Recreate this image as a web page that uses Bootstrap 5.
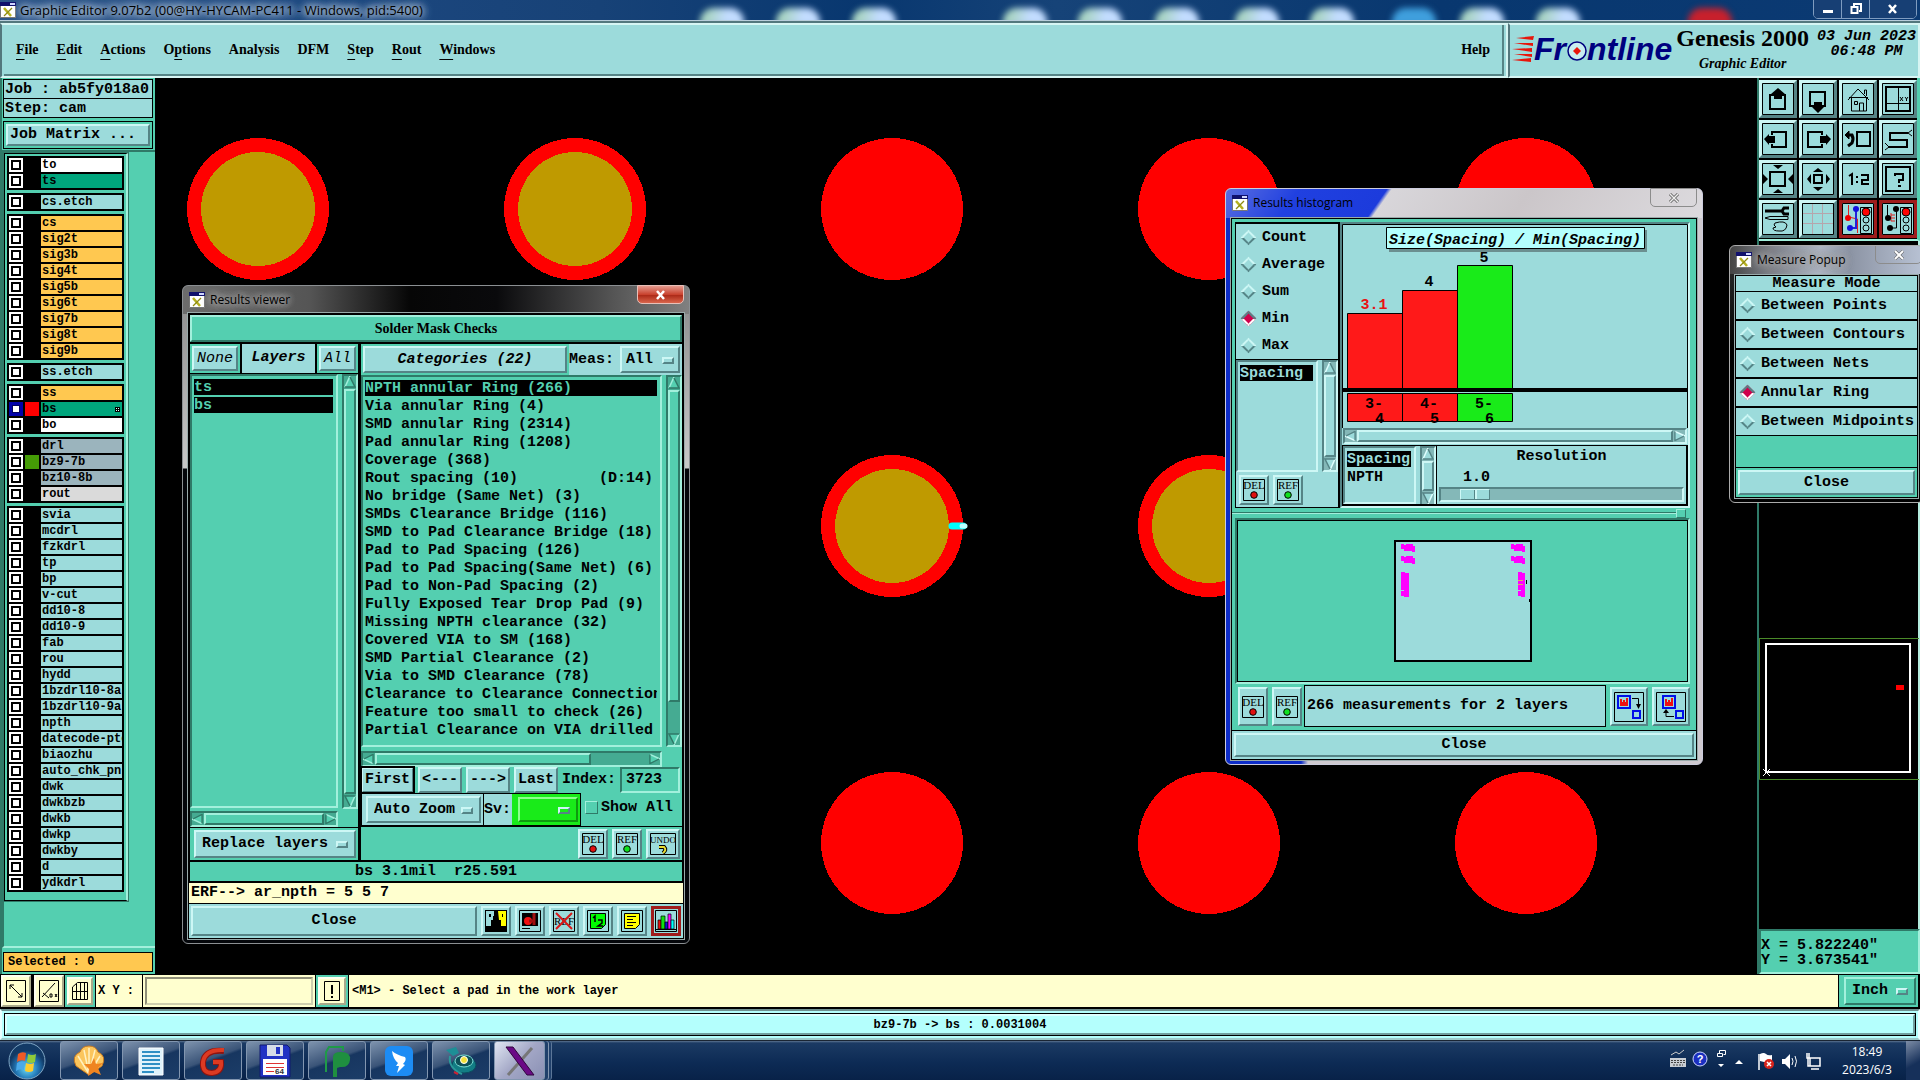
<!DOCTYPE html>
<html lang="en">
<head>
<meta charset="utf-8">
<meta name="viewport" content="width=device-width, initial-scale=1">
<title>Graphic Editor 9.07b2</title>
<link href="https://cdn.jsdelivr.net/npm/bootstrap@5.3.0/dist/css/bootstrap.min.css" rel="stylesheet">
<style>
:root{--cy:#9cdbdb;--cyl:#cdf7f5;--cyd:#558486;--te:#54cfb0;--tel:#a2f0dc;--ted:#2f7a68;--or:#ffc850;--cr:#ffffcf;}
body{min-height:100vh;background:#000;color:#000;font:700 15px/18px "Liberation Mono",monospace;overflow:hidden}
button,input,select{font:inherit;color:inherit;border-radius:0;padding:0;margin:0}
button{white-space:nowrap}
a{color:inherit;text-decoration:none}
svg{display:block;flex:none}
.sans{font-family:"Open Sans","Noto Sans",sans-serif;font-weight:400;font-size:12px}
.serif{font-family:"Liberation Serif",serif;font-size:14px}
.m12{font-size:12px;line-height:14px}
.up{background:var(--cy);border:2px solid;border-color:var(--cyl) var(--cyd) var(--cyd) var(--cyl)}
.upt{background:var(--te);border:2px solid;border-color:var(--tel) var(--ted) var(--ted) var(--tel)}
.dn{background:var(--cy);border:2px solid;border-color:var(--cyd) var(--cyl) var(--cyl) var(--cyd)}
.dnt{background:var(--te);border:2px solid;border-color:var(--ted) var(--tel) var(--tel) var(--ted)}
.upc{background:var(--cr);border:2px solid;border-color:#fffff0 #a9a98a #a9a98a #fffff0}
.bgc{background:var(--cy)}.bgt{background:var(--te)}.bgy{background:var(--cr)}
.min0{min-width:0}
/* desktop title strip */
.topstrip{height:21px;background:linear-gradient(90deg,#2c5488 0,#1d4880 300px,#174277 600px,#08376f 45%,#164378 55%,#08376f 75%,#0b3a73);border-bottom:1px solid #b8cdda;position:relative;overflow:hidden}
.topstrip.sans{font-size:13px}
.blob{position:absolute;top:8px;width:44px;height:18px;border-radius:14px 14px 0 0;background:linear-gradient(100deg,#a9d4c4 20%,#c2dcff 60%);filter:blur(3px)}
.glow{text-shadow:0 0 6px #b9cbdd,0 0 8px #b9cbdd,0 0 10px #b9cbdd,0 0 12px #b9cbdd}
.capbtns{position:absolute;right:3px;top:-1px;height:20px;border:1px solid #7f9cc0;border-radius:0 0 5px 5px;overflow:hidden}
.capbtns button{background:#173f74;border:0;border-right:1px solid #7f9cc0;width:28px;display:flex;align-items:center;justify-content:center}
.capbtns button:last-child{width:46px;border:0}
/* menu */
.menurow{border-top:2px solid #53777d;height:57px}
.menurow nav{border:2px solid;border-color:#d6f5f3 #d6f5f3 #d6f5f3 #53777d;background:var(--cy);padding:2px}
.menubox{border-right:2px solid var(--cyd);border-bottom:2px solid var(--cyd);margin:-2px 0}
.menubox a{margin-right:18px}
.menubox u{text-underline-offset:5px;text-decoration-thickness:1px}
.brand{width:412px;border:2px solid;border-color:#d6f5f3 #d6f5f3 #d6f5f3 #53777d;background:var(--cy)}
.logotxt{font:italic 700 32px/32px "Liberation Sans",sans-serif;color:#00007f}
.gen{font:700 24px/26px "Liberation Serif",serif}
/* left */
.leftcol{width:155px;background:var(--te);border-left:2px solid var(--ted);padding-top:1px}
.inset{margin:0 2px 0 1px}
.bx{border:1px solid #000;padding:0 1px;height:20px;line-height:20px;margin-bottom:-1px;white-space:nowrap}
.lists{border-top:2px solid var(--ted);border-left:2px solid var(--ted);border-bottom:2px solid var(--tel);margin-top:1px;padding-top:1px}
.listbox{width:124px;border:1px solid #000;border-right:2px solid var(--tel);padding:2px 2px 8px;gap:3px;outline:1px solid var(--ted)}
.grp{background:#000;padding:2px;gap:2px;width:117px}
.lyr{display:flex;gap:2px;height:14px}
.lyr input{appearance:none;width:14px;height:14px;background:#fff;box-shadow:inset 0 0 0 2px #fff,inset 0 0 0 4px #000}
.lyr.sel input{box-shadow:inset 0 0 0 3px #0000a8,inset 0 0 0 4px #000060}
.lyr i{width:14px;background:#000}
.lyr b{width:81px;background:var(--cy);overflow:hidden;white-space:nowrap;font-size:12px;line-height:14px;padding-left:1px}
.lo b{background:var(--or)}.lw b{background:#fff}.lg b{background:#00a67d}.ly b{background:#9bb4bd}.lr b{background:#dadada}
/* canvas */
.cnv{flex:1;min-width:0;overflow:hidden}
/* right */
.rightcol{width:163px;background:#000;border-left:2px solid var(--ted)}
.tools{display:grid;grid-template-columns:repeat(4,38px);gap:2px;padding:2px 0 2px;border-bottom:2px solid var(--tel);border-right:3px solid var(--te);height:163px}
.tools button{width:38px;height:38px;border-width:3px;display:flex;align-items:center;justify-content:center}
.tools .redb{border-color:#a01c1c;background:var(--cy)}
.pv{border-right:2px solid #b5ecdf}
.xyread{line-height:15px;padding:7px 0 4px}
/* command */
.cmd{background:#000;height:35px;padding:1px 2px 2px 1px;gap:1px}
.sq{width:30px;display:flex;align-items:center;justify-content:center}
.stat{border:2px solid #6f9090;border-color:#6f9090 #e8ffff #9ccaca #e8ffff;height:31px;background:#b4fffd;padding:2px}
.stat>div{border:1px solid #000;height:100%}
.stat>div>div{border:2px solid;border-color:#dcffff #6f9f9f #6f9f9f #dcffff;height:100%}
/* nub menus */
.opt{position:relative;display:flex}
.opt select{appearance:none;width:100%;padding-left:6px;outline:0;border-width:2px;border-style:solid;background-color:transparent}
.opt select.up{background-color:var(--cy)}
.opt::after{content:"";position:absolute;right:8px;top:50%;width:12px;height:7px;margin-top:-3px;border:2px solid;border-color:#cdf7f5 #558486 #558486 #cdf7f5;pointer-events:none}
/* windows */
.win{position:absolute;border:1px solid #8b8f92;border-radius:6px;padding:0 5px 4px;display:flex;flex-direction:column}
.wt{height:27px;display:flex;align-items:center;gap:5px;padding-left:1px;position:relative}
.wx{position:absolute;right:0;top:-1px;height:19px;width:47px;border:1px solid #8c8c8c;border-radius:0 0 5px 5px;display:flex;align-items:center;justify-content:center;background:transparent}
.wb{border:1px solid #000;outline:1px solid #9aa;flex:1;display:flex;flex-direction:column}
.wt .glow{text-shadow:0 0 6px #aaa,0 0 8px #aaa,0 0 10px #aaa,0 0 12px #999}
/* scroll parts */
.vs,.hs{display:flex;gap:1px;border:2px solid;border-color:var(--sd) var(--sl) var(--sl) var(--sd);background:var(--sb)}
.vs{flex-direction:column;width:16px;flex-shrink:0}
.hs{height:16px}
.vs>div,.hs>div{background:var(--sf);border:2px solid;border-color:var(--sl) var(--sd) var(--sd) var(--sl)}
.tt{--sd:#2f7a68;--sl:#a2f0dc;--sb:#45ab92;--sf:#54cfb0}
.tc{--sd:#558486;--sl:#cdf7f5;--sb:#84b8b8;--sf:#9cdbdb}
.r90{transform:rotate(90deg)}.r180{transform:rotate(180deg)}.r270{transform:rotate(270deg)}
.cats{list-style:none;margin:0;padding:3px 3px 0 2px;overflow:hidden}
.cats li{height:16px;line-height:17px;margin-bottom:2px;white-space:pre;overflow:hidden}
.cats li.on{background:#000;color:var(--te)}
.tc2 li.on{color:var(--cy)}
.dia{appearance:none;width:11px;height:11px;transform:rotate(45deg);border:2px solid;margin:0 2px;flex:none;border-image:linear-gradient(135deg,#cdf7f5 50%,#558486 50%) 2}
.dia:checked{background:#d0004c;border-image:linear-gradient(135deg,#558486 50%,#fff 50%) 2}
.rad{display:flex;align-items:center;gap:6px;height:27px}
.ib{width:30px;height:30px;display:flex;align-items:center;justify-content:center;flex:none}
.bb{border:1px solid #000}
.rng{appearance:none;height:15px;width:100%;background:#84b8b8;border:2px solid;border-color:#558486 #cdf7f5 #cdf7f5 #558486;display:block}
.rng::-webkit-slider-thumb{appearance:none;width:30px;height:11px;background:linear-gradient(90deg,#9cdbdb 13px,#558486 13px 14px,#cdf7f5 14px 16px,#9cdbdb 16px);border:1px solid;border-color:#cdf7f5 #558486 #558486 #cdf7f5}
/* taskbar */
.task{height:40px;background:linear-gradient(180deg,#5d7490 0,#1b3a63 2px,#0d2b55 55%,#082248);border-top:1px solid #1a2533}
.tb{width:58px;border:1px solid #8296b0;border-radius:3px;background:linear-gradient(160deg,#7d92ad 0,#3a5478 45%,#173660 50%,#1c3d68);display:flex;align-items:center;justify-content:center}
.tb.act{width:51px;background:linear-gradient(135deg,#e0e6f2,#a3a7c6 50%,#8a90b4);box-shadow:3px 0 0 #20406b,4px 0 0 #8296b0,6px 0 0 #20406b,7px 0 0 #5c7698}
</style>
<script src="https://cdn.jsdelivr.net/npm/bootstrap@5.3.0/dist/js/bootstrap.bundle.min.js" defer></script>
</head>
<body class="d-flex flex-column position-relative">
<svg width="0" height="0" class="position-absolute">
<defs>
<symbol id="xw" viewBox="0 0 16 16"><path fill="#fff" stroke="#777" d="M.5.5h15v15H.5z"/><path fill="#10106c" d="M0 0h16v4H0z"/><path fill="#cfd6ff" d="M10 1h5v2h-5z"/><path stroke="#b5b020" stroke-width="2.5" d="M4 6l7 8"/><path stroke="#8e8a10" stroke-width="1.2" d="M12 6l-8 8"/></symbol>
<symbol id="del" viewBox="0 0 22 22"><path fill="none" stroke="#000" d="M.5.5h21v21H.5z"/><text x="11" y="10" text-anchor="middle" font-family="Liberation Serif,serif" font-weight="400" font-size="11">DEL</text><circle cx="11" cy="16" r="3.3" fill="#e01010" stroke="#000"/></symbol>
<symbol id="ref" viewBox="0 0 22 22"><path fill="none" stroke="#000" d="M.5.5h21v21H.5z"/><text x="11" y="10" text-anchor="middle" font-family="Liberation Serif,serif" font-weight="400" font-size="11">REF</text><circle cx="11" cy="16" r="3.3" fill="#10e020" stroke="#000"/></symbol>
<symbol id="ta" viewBox="0 0 12 12"><path fill="#54cfb0" d="M6 1l5 10H1z"/><path stroke="#a2f0dc" stroke-width="1.5" d="M6 0L1 11"/><path fill="none" stroke="#2f7a68" stroke-width="1.5" d="M6 1l5 10H1"/></symbol>
<symbol id="tb" viewBox="0 0 12 12"><path fill="#9cdbdb" d="M6 1l5 10H1z"/><path stroke="#e0ffff" stroke-width="1.5" d="M6 0L1 11"/><path fill="none" stroke="#558486" stroke-width="1.5" d="M6 1l5 10H1"/></symbol>
</defs></svg>

<header class="topstrip d-flex align-items-center sans flex-shrink-0">
<span class="blob" style="left:700px"></span><span class="blob" style="left:776px"></span><span class="blob" style="left:852px"></span><span class="blob" style="left:1003px"></span><span class="blob" style="left:1078px"></span><span class="blob" style="left:1155px"></span><span class="blob" style="left:1235px"></span><span class="blob" style="left:1310px"></span><span class="blob" style="left:1392px;background:#3f9fdd"></span><span class="blob" style="left:1460px"></span><span class="blob" style="left:1536px"></span><span class="blob" style="left:1688px;background:#c8202c"></span>
<svg width="16" height="16"><use href="#xw"/></svg><span class="glow ms-1 position-relative">Graphic Editor 9.07b2 (00@HY-HYCAM-PC411 - Windows, pid:5400)</span>
<div class="capbtns d-flex">
<button type="button" aria-label="Minimize"><svg width="12" height="12"><path fill="#fff" d="M1 7h10v3H1z"/></svg></button>
<button type="button" aria-label="Restore"><svg width="12" height="12" fill="none" stroke="#fff" stroke-width="2"><path d="M4 3V1h7v7H9M1.500 4h6v6h-6z"/></svg></button>
<button type="button" aria-label="Close window"><svg width="12" height="12" stroke="#fff" stroke-width="2.500"><path d="M2 2l7 8M9 2l-7 8"/></svg></button></div>
</header>

<div class="menurow d-flex flex-shrink-0">
<nav class="flex-grow-1 d-flex serif" aria-label="Main"><div class="menubox flex-grow-1 d-flex align-items-center ps-2 pe-2">
<a href="#" class="ms-1"><u>F</u>ile</a><a href="#"><u>E</u>dit</a><a href="#"><u>A</u>ctions</a><a href="#">O<u>p</u>tions</a><a href="#">Analysis</a><a href="#">DFM</a><a href="#"><u>S</u>tep</a><a href="#"><u>R</u>out</a><a href="#"><u>W</u>indows</a><a href="#" class="ms-auto me-1">Help</a></div></nav>
<div class="brand d-flex" style="padding-left:2px">
<div class="d-flex align-items-center pb-1"><svg width="22" height="30" fill="#e8160c"><path d="M4 4l18-2-1 4zM2 9h19v3zM0 15l20-1v4zM2 20h18v3zM0 26l19-2v4z"/></svg><span class="logotxt">Fr</span><svg width="21" height="26" viewBox="0 0 21 26"><circle cx="11" cy="15" r="9" fill="#c8eef0" stroke="#00007f" stroke-width="1.500"/><path fill="#e8160c" d="M11 11l4 4-4 4-4-4z"/></svg><span class="logotxt">ntline</span></div>
<div class="text-center ms-1"><div class="gen">Genesis 2000</div><div class="serif fst-italic mt-1">Graphic Editor</div></div>
<div class="text-center fst-italic ms-auto" style="line-height:15px;margin-right:2px"><div class="pt-1">03 Jun 2023</div>06:48 PM</div>
</div></div>

<main class="d-flex flex-grow-1">
<aside class="leftcol d-flex flex-column">
<div class="inset"><div class="bx bgc">Job : ab5fy018a0</div><div class="bx bgc">Step: cam</div></div>
<div class="inset bb mt-1" style="padding:2px"><button type="button" class="up w-100 text-start d-block" style="padding-left:2px">Job Matrix ...</button></div>
<div class="lists flex-grow-1"><div class="listbox d-flex flex-column">
<div class="grp d-flex flex-column"><label class="lyr lw"><input type="checkbox"><i></i><b>to</b></label><label class="lyr lg"><input type="checkbox"><i></i><b>ts</b></label></div>
<div class="grp d-flex flex-column"><label class="lyr"><input type="checkbox"><i></i><b>cs.etch</b></label></div>
<div class="grp d-flex flex-column"><label class="lyr lo"><input type="checkbox"><i></i><b>cs</b></label><label class="lyr lo"><input type="checkbox"><i></i><b>sig2t</b></label><label class="lyr lo"><input type="checkbox"><i></i><b>sig3b</b></label><label class="lyr lo"><input type="checkbox"><i></i><b>sig4t</b></label><label class="lyr lo"><input type="checkbox"><i></i><b>sig5b</b></label><label class="lyr lo"><input type="checkbox"><i></i><b>sig6t</b></label><label class="lyr lo"><input type="checkbox"><i></i><b>sig7b</b></label><label class="lyr lo"><input type="checkbox"><i></i><b>sig8t</b></label><label class="lyr lo"><input type="checkbox"><i></i><b>sig9b</b></label></div>
<div class="grp d-flex flex-column"><label class="lyr"><input type="checkbox"><i></i><b>ss.etch</b></label></div>
<div class="grp d-flex flex-column"><label class="lyr lo"><input type="checkbox"><i></i><b>ss</b></label><label class="lyr lg sel"><input type="checkbox" checked><i style="background:#f00"></i><b class="d-flex justify-content-between align-items-center">bs<svg width="7" height="5"><path d="M0 0h5v5H0z"/><path fill="#dff" d="M1 1h1v1H1zM3 1h1v1H3zM1 3h1v1H1zM3 3h1v1H3z"/></svg></b></label><label class="lyr lw"><input type="checkbox"><i></i><b>bo</b></label></div>
<div class="grp d-flex flex-column"><label class="lyr ly"><input type="checkbox"><i></i><b>drl</b></label><label class="lyr ly"><input type="checkbox"><i style="background:#459c06"></i><b>bz9-7b</b></label><label class="lyr ly"><input type="checkbox"><i></i><b>bz10-8b</b></label><label class="lyr lr"><input type="checkbox"><i></i><b>rout</b></label></div>
<div class="grp d-flex flex-column"><label class="lyr"><input type="checkbox"><i></i><b>svia</b></label><label class="lyr"><input type="checkbox"><i></i><b>mcdrl</b></label><label class="lyr"><input type="checkbox"><i></i><b>fzkdrl</b></label><label class="lyr"><input type="checkbox"><i></i><b>tp</b></label><label class="lyr"><input type="checkbox"><i></i><b>bp</b></label><label class="lyr"><input type="checkbox"><i></i><b>v-cut</b></label><label class="lyr"><input type="checkbox"><i></i><b>dd10-8</b></label><label class="lyr"><input type="checkbox"><i></i><b>dd10-9</b></label><label class="lyr"><input type="checkbox"><i></i><b>fab</b></label><label class="lyr"><input type="checkbox"><i></i><b>rou</b></label><label class="lyr"><input type="checkbox"><i></i><b>hydd</b></label><label class="lyr"><input type="checkbox"><i></i><b>1bzdrl10-8a</b></label><label class="lyr"><input type="checkbox"><i></i><b>1bzdrl10-9a</b></label><label class="lyr"><input type="checkbox"><i></i><b>npth</b></label><label class="lyr"><input type="checkbox"><i></i><b>datecode-pto</b></label><label class="lyr"><input type="checkbox"><i></i><b>biaozhu</b></label><label class="lyr"><input type="checkbox"><i></i><b>auto_chk_pnl</b></label><label class="lyr"><input type="checkbox"><i></i><b>dwk</b></label><label class="lyr"><input type="checkbox"><i></i><b>dwkbzb</b></label><label class="lyr"><input type="checkbox"><i></i><b>dwkb</b></label><label class="lyr"><input type="checkbox"><i></i><b>dwkp</b></label><label class="lyr"><input type="checkbox"><i></i><b>dwkby</b></label><label class="lyr"><input type="checkbox"><i></i><b>d</b></label><label class="lyr"><input type="checkbox"><i></i><b>ydkdrl</b></label></div>
</div></div>
<div class="inset bb m12 mt-1 px-1" style="background:var(--or);line-height:18px;margin-bottom:2px">Selected : 0</div>
</aside>

<section class="cnv" aria-label="Board view"><svg width="1602" height="895">
<g fill="#f00" shape-rendering="crispEdges"><circle cx="103" cy="131" r="71"/><circle cx="420" cy="131" r="71"/><circle cx="737" cy="131" r="71"/><circle cx="1054" cy="131" r="71"/><circle cx="1371" cy="131" r="71"/><circle cx="737" cy="448" r="71"/><circle cx="1054" cy="448" r="71"/><circle cx="737" cy="765" r="71"/><circle cx="1054" cy="765" r="71"/><circle cx="1371" cy="765" r="71"/></g>
<g fill="#bf9a00" shape-rendering="crispEdges"><circle cx="103" cy="131" r="57"/><circle cx="420" cy="131" r="57"/><circle cx="737" cy="448" r="57"/><circle cx="1054" cy="448" r="57"/></g>
<path stroke="#0ff" stroke-width="7" stroke-linecap="round" d="M797 448h11"/><path stroke="#bff" stroke-width="5" stroke-linecap="round" d="M807 448h3"/></svg></section>

<aside class="rightcol d-flex flex-column">
<div class="tools">
<button class="up" type="button" aria-label="Pan up"><svg width="32" height="32" fill="none" stroke="#000"><path d="M.5.500h31v31H.5z"/><path stroke-width="2" d="M13 12H8v14h15V12h-4"/><path fill="#000" stroke="none" d="M16 5l7 6h-3v5h-8v-5H9z"/></svg></button>
<button class="up" type="button" aria-label="Pan down"><svg width="32" height="32" fill="none" stroke="#000"><path d="M.5.500h31v31H.5z"/><path stroke-width="2" d="M13 23H8V9h15v14h-4"/><path fill="#000" stroke="none" d="M16 30l6-6h-2v-5h-8v5h-2z"/></svg></button>
<button class="up" type="button" aria-label="Home"><svg width="32" height="32" fill="none" stroke="#000"><path d="M.5.500h31v31H.5z"/><path d="M9.500 14v14h15V14M6 17L16 6l11 11M7 14.500h19M12.500 18.500h3v3h-3zM17.500 28v-8h4v8M22.500 11V7h2v6"/></svg></button>
<button class="up" type="button" aria-label="Area by XY"><svg width="32" height="32" fill="none" stroke="#000"><path d="M.5.500h31v31H.5z"/><path stroke-width="2" d="M4 4h24v24H4z"/><path d="M16.500 5v22M5 20.500h22M18 14l3 4m0-4l-3 4M23 14l1.500 2 1.500-2m-1.500 2v2"/></svg></button>
<button class="up" type="button" aria-label="Pan left"><svg width="32" height="32" fill="none" stroke="#000"><path d="M.5.500h31v31H.5z"/><path stroke-width="2" d="M10 12V9h14v15H10v-3"/><path fill="#000" stroke="none" d="M2 16l5-5v2h6v7H7v2z"/></svg></button>
<button class="up" type="button" aria-label="Pan right"><svg width="32" height="32" fill="none" stroke="#000"><path d="M.5.500h31v31H.5z"/><path stroke-width="2" d="M20 12V9H6v15h14v-3"/><path fill="#000" stroke="none" d="M29 16l-5-5v2h-6v7h6v2z"/></svg></button>
<button class="up" type="button" aria-label="Previous view"><svg width="32" height="32" fill="none" stroke="#000"><path d="M.5.500h31v31H.5z"/><path stroke-width="2" d="M15 9h13v14H15z"/><path stroke-width="3" d="M6 12h4q2 4 0 8l-4 3"/><path fill="#000" d="M3 12l4-4v8z"/></svg></button>
<button class="up" type="button" aria-label="Serpentine"><svg width="32" height="32" fill="none" stroke="#000"><path d="M.5.500h31v31H.5z"/><path stroke-width="2" d="M26 10H8v7h17v7H6"/><path d="M26 10l4-3m-4 3l4 3M7 24l-4-4m4 4l-4 3"/></svg></button>
<button class="up" type="button" aria-label="Zoom in"><svg width="32" height="32" fill="none" stroke="#000"><path d="M.5.500h31v31H.5z"/><path stroke-width="2" d="M8 9h15v14H8z"/><path fill="#000" stroke="none" d="M16 6l5-4H11zM16 26l5 4H11zM6 16l-5-5v10zM26 16l5-5v10z"/></svg></button>
<button class="up" type="button" aria-label="Zoom out"><svg width="32" height="32" fill="none" stroke="#000"><path d="M.5.500h31v31H.5z"/><path stroke-width="2" d="M12 12h8v8h-8z"/><path fill="#000" stroke="none" d="M16 5l5 4H11zM16 28l5-4H11zM5 16l4-5v10zM28 16l-4-5v10z"/></svg></button>
<button class="up" type="button" aria-label="Scale 1:2"><svg width="32" height="32" fill="none" stroke="#000"><path d="M.5.500h31v31H.5z"/><path stroke-width="2" d="M7 13l3-2v11M14 14h2m-2 5h2M19 12h7v5h-6v4h7"/></svg></button>
<button class="up" type="button" aria-label="Help query"><svg width="32" height="32" fill="none" stroke="#000"><path d="M.5.500h31v31H.5z"/><path stroke-width="2" d="M4 4h24v24H4zM13 13v-2h8v6h-4v3m-1 3h3"/></svg></button>
<button class="up" type="button" aria-label="Tools"><svg width="32" height="32" fill="none" stroke="#000"><path d="M.5.500h31v31H.5z"/><path stroke-width="3" d="M3 8h16m8-3h-5l-2 3 2 3h5"/><path d="M8 13.500h18v3H8l-5-1.500zM13 20q10-3 12 2-1 7-8 6-6 0-6-3l3-1-2-2z"/></svg></button>
<button class="up" type="button" aria-label="Grid"><svg width="32" height="32" fill="none" stroke="#000"><path stroke="#b5a5ac" d="M10.500 1v30M20.500 1v30M1 10.500h30M1 20.500h30"/><path d="M.5.500h31v31H.5z"/></svg></button>
<button class="up redb" type="button" aria-label="Net signals"><svg width="32" height="32" fill="none" stroke="#000"><path d="M.5.500h31v31H.5zM18.500 4.500h11v26h-11z"/><path stroke="#e02020" d="M6.500 2v12l9 2v14"/><path stroke="#22d" stroke-width="2" d="M14 5v20H9"/><g stroke="none"><circle cx="14" cy="6" r="3" fill="#11d"/><circle cx="6" cy="15" r="3" fill="#e00"/><circle cx="8" cy="25" r="3" fill="#11d"/></g><circle cx="24" cy="9" r="4" fill="#f00"/><circle cx="24" cy="17" r="3"/><circle cx="24" cy="25" r="3"/></svg></button>
<button class="up redb" type="button" aria-label="Drc signals"><svg width="32" height="32" fill="none" stroke="#000"><path d="M.5.500h31v31H.5zM18.500 4.500h11v26h-11zM5.500 2v13M14.500 5v20H9"/><path stroke="#e02020" d="M8 15h5m-4-3h4m-4 6h4m-4-8v8"/><g stroke="none" fill="#000"><circle cx="14" cy="6" r="3"/><circle cx="6" cy="15" r="3"/><circle cx="8" cy="25" r="3"/></g><circle cx="24" cy="9" r="4" fill="#f00"/><circle cx="24" cy="17" r="3"/><circle cx="24" cy="25" r="3"/></svg></button>
</div>
<div class="pv flex-grow-1 d-flex align-items-end"><svg width="160" height="291" fill="none"><path stroke="#4a8a28" d="M.5.500h162M.5 0v141.500h162"/><path stroke="#fff" stroke-width="2" d="M7 6h144v128H7z"/><path fill="#f00" d="M137 47h8v5h-8z"/><path stroke="#fff" d="M4 131l7 7m0-7l-7 7"/></svg></div>
<div class="dnt xyread">X = 5.822240"<br>Y = 3.673541"</div>
</aside>
</main>

<div class="cmd d-flex flex-shrink-0">
<button type="button" class="upc sq" aria-label="Snap line"><svg width="20" height="22" fill="none" stroke="#000"><path d="M.5.500h19v21H.5zM4 5l12 12M4 9V5h4M16 13v4h-4"/></svg></button>
<button type="button" class="upc sq" style="margin-left:2px" aria-label="Snap angle"><svg width="20" height="22" fill="none" stroke="#000"><path d="M.5.500h19v21H.5zM3 17L16 3M4 13l6 5M11 14h2v3h-2zM16 14l2 3m0-3l-2 3"/></svg></button>
<div class="bgt" style="padding:2px"><button type="button" class="upc sq h-100" style="width:26px" aria-label="Snap grid"><svg width="18" height="20" fill="none" stroke="#000"><path d="M1.500 6l5-4.500h10v17h-15zM9.500 1v18M1 10.500h16M5.500 3v16M13.500 1v18"/></svg></button></div>
<label for="xy" class="bgy m12 d-flex align-items-center" style="width:46px;padding-left:2px;white-space:pre">X Y :</label>
<div class="bgy" style="width:172px;padding:2px"><input id="xy" type="text" class="w-100 h-100" style="background:var(--cr);border:2px solid;border-color:#8f8f78 #cfcfae #cfcfae #8f8f78"></div>
<div class="bgt" style="padding:2px"><button type="button" class="upc sq h-100" style="width:28px" aria-label="Alert"><svg width="16" height="20" fill="none" stroke="#000"><path d="M.5.500h15v19H.5z"/><path stroke-width="2" d="M8 4v9m0 2v2"/></svg></button></div>
<div class="bgy m12 flex-grow-1 d-flex align-items-center" style="padding-left:3px">&lt;M1&gt; - Select a pad in the work layer</div>
<div class="bgt" style="width:79px;padding:2px 2px 2px 5px"><div class="opt tt h-100"><select aria-label="Units" style="border-color:var(--tel) var(--ted) var(--ted) var(--tel)"><option>Inch</option></select></div></div>
</div>
<div class="stat flex-shrink-0"><div><div class="m12 d-flex align-items-center justify-content-center">bz9-7b -&gt; bs : 0.0031004</div></div></div>

<footer class="task d-flex flex-shrink-0 sans text-white">
<button type="button" class="border-0 bg-transparent d-flex align-items-center" style="width:60px;padding-left:8px" aria-label="Start"><svg width="38" height="38"><defs><radialGradient id="orb" cx=".5" cy=".7"><stop offset="0" stop-color="#6fe0f8"/><stop offset=".6" stop-color="#2379b8"/><stop offset="1" stop-color="#123a66"/></radialGradient></defs><circle cx="19" cy="19" r="18" fill="url(#orb)" stroke="#7fa6c4"/><path fill="#ee5a26" d="M10 12q4-3 8-1l-1 8q-4-2-8 1z"/><path fill="#8fcb3a" d="M20 12q4 2 8 0l-1 8q-4 2-8 0z"/><path fill="#4aa9ea" d="M9 21q4-3 8-1l-1 8q-4-2-8 1z"/><path fill="#fccc2e" d="M18 21q4 2 8 0l-1 8q-4 2-8 0z"/></svg></button>
<div class="d-flex gap-1">
<button type="button" class="tb" aria-label="Shell"><svg width="34" height="34"><path fill="#fbc55c" stroke="#c97a20" d="M17 31L4 22Q-1 12 8 8q2-6 9-6t9 6q9 4 4 14z"/><path fill="none" stroke="#fff0c0" stroke-width="1.500" d="M17 30L6 12m11 18L12 6m5 24V4m0 26L23 6m-6 24l11-18"/><path fill="#ef8420" d="M22 14l2 6 7-1-5 5 3 7-7-3-6 4 1-7-5-5 7 0z"/></svg></button>
<button type="button" class="tb" aria-label="Notepad"><svg width="26" height="30"><path fill="#dff2fb" stroke="#fff" d="M1 2h24v27H1z"/><path stroke="#2f8fc4" stroke-width="2" d="M4 6h18M4 10h18M4 14h18M4 18h18M4 22h18M4 26h12"/></svg></button>
<button type="button" class="tb" aria-label="G app"><svg width="32" height="32" fill="none"><path stroke="#8e1410" stroke-width="6" d="M27 6Q8 4 6 17q-1 11 9 11 10-1 9-11h-8"/><path stroke="#dc3a22" stroke-width="4" d="M27 5Q8 4 6 17q-1 11 9 11 10-1 9-11h-8"/></svg></button>
<button type="button" class="tb" aria-label="Total Commander"><svg width="32" height="34"><path fill="#2233c4" stroke="#101a70" d="M1 1h27l3 3v29H1z"/><path fill="#d6dce8" d="M8 1h16v11H8z"/><path fill="#2233c4" d="M17 3h4v7h-4z"/><path fill="#fff" d="M4 15h24v16H4z"/><path stroke="#d33" d="M7 19.500h18M7 23.500h18M7 27.500h8"/><text x="16" y="30" fill="#333" font-size="8" font-weight="700" font-family="Liberation Sans,sans-serif">64</text></svg></button>
<button type="button" class="tb" aria-label="P app"><svg width="34" height="34" fill="none"><path stroke="#1f9a48" stroke-width="2" d="M6 28V8l3-5h14v4"/><path fill="#1f8f40" d="M13 33V13q0-5 8-5 10 0 9 8-1 8-10 7l-3 1v9z"/></svg></button>
<button type="button" class="tb" aria-label="DingTalk"><svg width="28" height="30"><rect width="28" height="30" rx="6" fill="#1d8cf4"/><path fill="#fff" d="M7 5q5 4 13 6 2 3-2 7l2 1-8 8 2-7h-3l2-3Q8 13 7 5z"/></svg></button>
<button type="button" class="tb" aria-label="Viewer"><svg width="34" height="30" fill="none"><path fill="#1d8f96" d="M2 4l10-3 3 6-6 3z"/><ellipse cx="20" cy="19" rx="12" ry="8" fill="#127d84" stroke="#0a4f60"/><ellipse cx="20" cy="15" rx="9" ry="6" fill="#0d5058" stroke="#7fe0d8"/><circle cx="20" cy="14" r="3.500" fill="#f3e03a" stroke="#fff"/><path stroke="#2a9a9a" stroke-width="2" d="M6 10q-2 12 12 18"/><path stroke="#c23" stroke-width="2" d="M10 26l4 2"/></svg></button>
<button type="button" class="tb act" aria-label="X server"><svg width="34" height="34"><path stroke="#777" stroke-width="3" d="M29 4L5 31"/><path fill="#6b0a86" stroke="#30043c" d="M3 3h7l21 28h-7z"/></svg></button>
</div>
<div class="ms-auto d-flex align-items-center">
<svg width="160" height="34" fill="none"><path fill="#c9ced4" d="M2 14h16v9H2z"/><path stroke="#444" stroke-dasharray="2 1" d="M3 16.500h14M3 18.500h14M5 21h10"/><path stroke="#ccc" d="M3 11l5-3 3 2 5-4"/><circle cx="32" cy="15" r="7" fill="#1b2fc0" stroke="#cdd6ff"/><text x="32" y="19" fill="#fff" text-anchor="middle" font-size="11" font-weight="700" font-family="Liberation Sans,sans-serif">?</text><path stroke="#fff" d="M51.500 9V6.500h6v4h-2M49.500 9.500h5v3h-5z"/><path fill="#fff" d="M50 20h6l-3 3zM67 20h8l-4-4z"/><path stroke="#fff" stroke-width="1.500" d="M91 10v16"/><path fill="#fff" d="M92 10q4-2 6 0t6 1v7q-6 1-12-1z"/><circle cx="101" cy="20" r="5" fill="#d8241c"/><path stroke="#fff" stroke-width="1.500" d="M99 18l4 4m0-4l-4 4"/><path fill="#fff" d="M114 15h3l5-5v15l-5-5h-3z"/><path stroke="#fff" d="M124 14q2 3 0 7m3-9q3 5 0 11"/><path stroke="#fff" stroke-width="1.500" d="M142 14h10v8h-10zM143 25h8M139 9v5h2v-5m-1 5v8h2"/></svg>
<time class="text-center" style="line-height:18px;width:78px">18:49<br>2023/6/3</time>
<button type="button" class="border-0 h-100" style="width:14px;background:linear-gradient(150deg,#7d8da6,#16305a 60%);border-left:1px solid #889" aria-label="Show desktop"></button>
</div></footer>

<!-- Results viewer -->
<section class="win" style="left:182px;top:285px;width:508px;background:linear-gradient(90deg,#6c6c6c 0,#555 25%,#060606 45%,#0a0a0c 62%,#555 85%,#808080) 0 0/100% 28px no-repeat,linear-gradient(#8a8a8a 0,#c8c8c8 182px,#04060a 183px,#04060a 100%)">
<div class="wt sans"><svg width="16" height="16"><use href="#xw"/></svg><span class="glow">Results viewer</span><button type="button" class="wx" style="background:linear-gradient(#e59a8e,#c9422e 50%,#a92614 51%,#d9654c);border-color:#e8c0b8" aria-label="Close results viewer"><svg width="12" height="12" stroke="#fff" stroke-width="2.500"><path d="M2 2l7 8M9 2l-7 8"/></svg></button></div>
<div class="wb bg-black tt" style="padding:1px 1px 0;gap:2px">
<div class="upt serif text-center" style="line-height:23px">Solder Mask Checks</div>
<div class="d-flex" style="gap:3px">
 <div class="d-flex flex-column flex-shrink-0" style="width:168px;gap:1px">
  <div class="d-flex fst-italic" style="gap:2px;height:29px"><div class="bgt" style="padding:2px"><button type="button" class="up h-100 fst-italic fw-normal" style="padding:0 3px">None</button></div><div class="bgc flex-grow-1 text-center" style="line-height:28px">Layers</div><div class="bgt" style="padding:2px"><button type="button" class="up h-100 fst-italic fw-normal" style="padding:0 3px">All</button></div></div>
  <div class="bgt d-flex flex-grow-1" style="gap:4px"><div class="d-flex flex-column flex-grow-1" style="gap:3px"><ul class="cats dnt flex-grow-1"><li class="on">ts</li><li class="on">bs</li></ul><div class="hs"><svg width="11" height="12" class="r270"><use href="#ta"/></svg><div class="flex-grow-1"></div><svg width="11" height="12" class="r90"><use href="#ta"/></svg></div></div><div class="vs" style="margin-bottom:18px"><svg width="12" height="12"><use href="#ta"/></svg><div class="flex-grow-1"></div><svg width="12" height="12" class="r180"><use href="#ta"/></svg></div></div>
  <div class="bgt ps-1" style="height:32px;padding:2px"><div class="opt h-100"><select class="up" aria-label="Layer mode"><option>Replace layers</option></select></div></div>
 </div>
 <div class="d-flex flex-column flex-grow-1 bgt min0">
  <div class="d-flex bgc" style="height:31px"><div class="bgt" style="width:208px;padding:2px"><button type="button" class="up w-100 h-100 fst-italic">Categories (22)</button></div><label for="meas" class="align-self-center">Meas:</label><div class="opt flex-grow-1 ms-1" style="padding:2px"><select id="meas" class="up" style="padding-left:4px"><option>All</option></select></div></div>
  <div class="d-flex" style="gap:4px"><div class="flex-grow-1 min0"><ul class="cats dnt" style="height:372px"><li class="on">NPTH annular Ring (266)</li><li>Via annular Ring (4)</li><li>SMD annular Ring (2314)</li><li>Pad annular Ring (1208)</li><li>Coverage (368)</li><li>Rout spacing (10)         (D:14)</li><li>No bridge (Same Net) (3)</li><li>SMDs Clearance Bridge (116)</li><li>SMD to Pad Clearance Bridge (18)</li><li>Pad to Pad Spacing (126)</li><li>Pad to Pad Spacing(Same Net) (6)</li><li>Pad to Non-Pad Spacing (2)</li><li>Fully Exposed Tear Drop Pad (9)</li><li>Missing NPTH clearance (32)</li><li>Covered VIA to SM (168)</li><li>SMD Partial Clearance (2)</li><li>Via to SMD Clearance (78)</li><li>Clearance to Clearance Connection</li><li>Feature too small to check (26)</li><li>Partial Clearance on VIA drilled</li></ul><div class="hs mt-1"><svg width="11" height="12" class="r270"><use href="#ta"/></svg><div style="width:216px"></div><svg width="11" height="12" class="r90 ms-auto"><use href="#ta"/></svg></div></div><div class="vs" style="height:372px"><svg width="12" height="12"><use href="#ta"/></svg><div style="height:312px"></div><svg width="12" height="12" class="r180 mt-auto"><use href="#ta"/></svg></div></div>
  <div class="d-flex" style="gap:4px;height:26px"><button type="button" class="up flex-shrink-0" style="outline:2px solid #000;outline-offset:-1px;width:53px">First</button><button type="button" class="up" style="width:44px">&lt;---</button><button type="button" class="up" style="width:44px">---&gt;</button><button type="button" class="up" style="width:44px">Last</button><label for="idx" class="align-self-center">Index:</label><input id="idx" class="dnt flex-grow-1 min0" style="padding-left:4px;margin-right:2px;width:50px" value="3723"></div>
  <div class="d-flex"><div class="d-flex bb" style="height:33px;width:220px"><div class="bgc ps-1" style="width:122px;padding:2px;border-right:1px solid #000"><div class="opt h-100"><select class="up" aria-label="Zoom mode"><option>Auto Zoom</option></select></div></div><label for="sv" class="bgc" style="line-height:31px;width:28px">Sv:</label><div class="flex-grow-1" style="background:#19eb19;padding:3px 2px 3px 6px"><div class="opt h-100"><select id="sv" style="border-color:#8dff8d #0f9a0f #0f9a0f #8dff8d"><option></option></select></div></div></div><label class="d-flex align-items-center ms-1 mb-1" style="gap:3px"><input type="checkbox" class="upt" style="appearance:none;width:13px;height:13px;border-width:1px">Show All</label></div>
  <div class="d-flex justify-content-end align-items-center flex-grow-1" style="gap:4px;padding-right:2px;height:34px;border-top:1px solid #000"><button type="button" class="up ib" aria-label="Delete"><svg width="22" height="22"><use href="#del"/></svg></button><button type="button" class="up ib" aria-label="Reference"><svg width="22" height="22"><use href="#ref"/></svg></button><button type="button" class="up ib" style="width:34px" aria-label="Undo"><svg width="26" height="22"><path fill="none" stroke="#000" d="M.5.500h25v21H.5z"/><text x="13" y="10" text-anchor="middle" font-family="Liberation Serif,serif" font-weight="400" font-size="9">UNDO</text><path fill="none" stroke="#000" stroke-width="4" d="M9 14h5q3 3-1 6"/><path fill="none" stroke="#e8dc30" stroke-width="2" d="M9 14h5q3 3-1 6"/></svg></button></div>
 </div>
</div>
<div class="bgt text-center" style="line-height:19px;white-space:pre">bs 3.1mil  r25.591</div>
<div class="bgy" style="line-height:19px;height:20px;margin:0 -1px -1px;padding-left:2px">ERF--&gt; ar_npth = 5 5 7</div>
<div class="bgc d-flex" style="padding:2px;gap:4px;margin:0 -1px;height:34px"><button type="button" class="up flex-grow-1">Close</button>
<button type="button" class="up ib" aria-label="Compare"><svg width="22" height="22"><path d="M0 0h22v22H0z"/><path fill="#9cdbdb" d="M1 1h8v5H8v4H6v6H1z"/><path fill="#ff0" d="M13 1h8v15h-5v-6h-2z"/><path d="M4 4h2v3H4zM17 4h1v3h-1z"/></svg></button>
<button type="button" class="up ib" aria-label="Snapshot"><svg width="22" height="22"><path fill="none" stroke="#000" d="M.5.500h21v21H.5z"/><path d="M3 3h16v13H3z"/><circle cx="9" cy="11" r="4" fill="#f01010"/><path stroke="#a01010" stroke-width="3" d="M15 3v12M10 11h5"/><path stroke="#000" d="M3 18.500h8"/></svg></button>
<button type="button" class="up ib" aria-label="Clear reference"><svg width="22" height="22"><path fill="none" stroke="#000" d="M.5.500h21v21H.5z"/><text x="11" y="15" text-anchor="middle" font-family="Liberation Serif,serif" font-weight="400" font-size="11">REF</text><path stroke="#d81818" stroke-width="2" d="M3 3l16 16M19 3L3 19"/></svg></button>
<button type="button" class="up ib" aria-label="Half"><svg width="22" height="22"><path fill="none" stroke="#000" d="M.5.500h21v21H.5z"/><path fill="#0f0" stroke="#000" d="M3.500 3.500h15v11l-4 4h-11z"/><path fill="none" stroke="#000" stroke-width="1.500" d="M6 8l2-2v6M11 10h4v3l-4 3h5"/></svg></button>
<button type="button" class="up ib" aria-label="Report"><svg width="22" height="22"><path fill="none" stroke="#000" d="M.5.500h21v21H.5z"/><path fill="#ff0" stroke="#000" d="M3.500 3.500h15v11l-4 4h-11z"/><path stroke="#000" d="M6 6.500h9M6 9.500h6M6 12.500h9M6 15.500h6"/></svg></button>
<button type="button" class="up ib" style="border-color:#a01c1c;border-width:3px" aria-label="Histogram"><svg width="22" height="22"><path fill="#9cdbdb" stroke="#000" d="M.5.500h21v21H.5z"/><g stroke="#000" stroke-width=".7"><path fill="#e01010" d="M3 10h3v9H3z"/><path fill="#10e010" d="M6 6h4v13H6z"/><path fill="#1010e0" d="M10 12h3v7h-3z"/><path fill="#f0f" d="M13 4h3v15h-3z"/><path fill="#0ff" d="M16 10h3v9h-3z"/></g><path stroke="#000" d="M1 19.500h20"/></svg></button></div>
</div></section>

<!-- Results histogram -->
<section class="win" style="left:1225px;top:188px;width:478px;border-color:#ccd;background:linear-gradient(125deg,#5a6ee0 0,#2040e0 60px,#1c3bdc 132px,#d8d6da 136px,#cbc6c9 250px,#dcdade) 0 0/100% 29px no-repeat,linear-gradient(90deg,#0d2cc8 0,#0d2cc8 75px,#cfcad0 82px)">
<div class="wt sans" style="height:29px;padding-bottom:2px"><svg width="16" height="16"><use href="#xw"/></svg><span>Results histogram</span><button type="button" class="wx" aria-label="Close histogram"><svg width="12" height="12" stroke="#555" stroke-width="3"><path d="M2 2l8 8M10 2l-8 8"/><path stroke="#eee" stroke-width="1.500" d="M2 2l8 8M10 2l-8 8"/></svg></button></div>
<div class="wb bgt">
<div class="d-flex" style="padding:3px 6px 2px 3px;height:291px">
 <div class="bgc d-flex flex-column tc flex-shrink-0" style="width:105px;border:1px solid #000;border-top-width:2px;border-right-width:2px">
  <div class="d-flex flex-column" style="border-bottom:1px solid #000;height:136px;padding:0 5px">
  <label class="rad"><input class="dia" type="radio" name="agg">Count</label><label class="rad"><input class="dia" type="radio" name="agg">Average</label><label class="rad"><input class="dia" type="radio" name="agg">Sum</label><label class="rad"><input class="dia" type="radio" name="agg" checked>Min</label><label class="rad"><input class="dia" type="radio" name="agg">Max</label></div>
  <div class="d-flex flex-grow-1 gap-1"><ul class="cats dn tc2 flex-grow-1 min0"><li class="on">Spacing </li></ul><div class="vs"><svg width="12" height="12"><use href="#tb"/></svg><div class="flex-grow-1"></div><svg width="12" height="12" class="r180"><use href="#tb"/></svg></div></div>
  <div class="d-flex gap-1" style="padding:3px 3px 2px"><button type="button" class="up ib" aria-label="Delete"><svg width="22" height="22"><use href="#del"/></svg></button><button type="button" class="up ib" aria-label="Reference"><svg width="22" height="22"><use href="#ref"/></svg></button></div>
 </div>
 <div class="dn flex-grow-1 min0 tc d-flex flex-column bgc">
  <svg width="346" height="204" font-family="Liberation Mono,monospace" font-size="15" font-weight="700"><path fill="none" stroke="#000" d="M.5 206V.5h345V206"/><path fill="#6b8f90" d="M47 6h258v22H47z"/><path fill="#b4fffd" stroke="#000" d="M44.500 3.500h258v21h-258z"/><text x="173" y="20" text-anchor="middle" font-style="italic">Size(Spacing) / Min(Spacing)</text>
  <g stroke="#000"><path fill="#ff1919" d="M5.500 89.500h55V166h-55zM60.500 66.500h55V166h-55zM5.500 169.500h55v28h-55zM60.500 169.500h55v28h-55z"/><path fill="#19eb19" d="M115.500 41.500h55V166h-55zM115.500 169.500h55v28h-55z"/></g><path d="M0 164h346v4H0z"/>
  <text x="32" y="85" text-anchor="middle" fill="#e81414">3.1</text><text x="87" y="62" text-anchor="middle">4</text><text x="142" y="38" text-anchor="middle">5</text>
  <text x="23" y="184">3-</text><text x="33" y="199">4</text><text x="78" y="184">4-</text><text x="88" y="199">5</text><text x="133" y="184">5-</text><text x="143" y="199">6</text></svg>
  <div class="hs" style="margin:0 1px 1px"><svg width="11" height="12" class="r270"><use href="#tb"/></svg><div class="flex-grow-1"></div><svg width="11" height="12" class="r90"><use href="#tb"/></svg></div>
  <div class="d-flex flex-grow-1" style="border:2px solid #000;border-top-width:1px;border-left-width:1px"><ul class="cats dn tc2 flex-shrink-0" style="width:73px"><li class="on">Spacing</li><li>NPTH</li></ul><div class="vs ms-1" style="border-bottom:0"><svg width="12" height="12"><use href="#tb"/></svg><div class="flex-grow-1"></div><svg width="12" height="12" class="r180"><use href="#tb"/></svg></div><div class="flex-grow-1 text-center d-flex flex-column" style="border-left:1px solid #000;padding:2px 2px"><label for="res" class="d-block">Resolution</label><output class="text-start flex-grow-1 d-flex align-items-end ms-4" for="res">1.0</output><input id="res" type="range" class="rng" min="0" max="10" step="0.1" value="0.9"></div></div>
 </div>
</div>
<div class="d-flex align-items-center" style="height:6px"><hr class="m-0 flex-grow-1 opacity-100" style="border-top:1px solid var(--ted);border-bottom:1px solid var(--tel)"><span class="upt" style="width:10px;height:9px;margin-right:10px;border-width:1px"></span></div>
<div class="dnt d-flex justify-content-center align-items-center" style="margin:2px 6px 1px 3px;height:166px;outline:1px solid #000;outline-offset:-3px"><svg width="140" height="124"><path fill="#9cdbdb" stroke="#000" stroke-width="2" d="M2 2h136v120H2z"/><g fill="#f0f"><path id="mg" d="M8 5h3v1h2V5h7v2h2v6h-3v-1h-8v-2H8z"/><use href="#mg" y="12"/><use href="#mg" x="110"/><use href="#mg" x="110" y="12"/><path d="M8 33h4v1h4v24h-5v-1H8zM125 33h4v1h3v24h-4v-1h-3z"/></g><path stroke="#da6" d="M125 41.500h5M125 45.500h5"/><path stroke="#9cdbdb" d="M8 51.500h3M125 51.500h3"/><path stroke="#000" d="M133.500 41v4"/><path d="M136 60h2v3h-2z"/></svg></div>
<div class="d-flex gap-1" style="padding:2px 6px 4px;height:45px"><button type="button" class="up ib h-100" aria-label="Delete"><svg width="22" height="22"><use href="#del"/></svg></button><button type="button" class="up ib h-100" aria-label="Reference"><svg width="22" height="22"><use href="#ref"/></svg></button><div class="bb bgc flex-grow-1" style="margin:-2px 0 -1px -2px;padding-left:2px;line-height:39px">266 measurements for 2 layers</div>
<button type="button" class="up ib h-100" style="width:38px" aria-label="Send"><svg width="30" height="30" fill="none"><path stroke="#000" d="M.5.500h29v29H.5zM18 6.500h6.500V14"/><path fill="#000" d="M22 12h5l-2.500 5z"/><path stroke="#0010e8" stroke-width="2" d="M4 4h12v12H4zM19 19h7v7h-7z"/><path fill="#f01010" d="M6 14V7h2v3h1V8h2v2h1V6h2v8z"/></svg></button><button type="button" class="up ib h-100" style="width:38px" aria-label="Fetch"><svg width="30" height="30" fill="none"><path stroke="#000" d="M.5.500h29v29H.5zM18 24.500H10V20"/><path fill="#000" d="M7 21h6l-3-4z"/><path stroke="#0010e8" stroke-width="2" d="M7 4h12v12H7zM20 19h7v7h-7z"/><path fill="#f01010" d="M9 14V7h2v3h1V8h2v2h1V6h2v8z"/></svg></button></div>
<div class="bgc" style="border-top:1px solid #000;padding:2px"><button type="button" class="up w-100 d-block" style="height:24px">Close</button></div>
</div></section>

<!-- Measure popup -->
<section class="win overflow-hidden" style="left:1729px;top:245px;width:195px;border-color:#aaa;padding:0 5px 4px;background:linear-gradient(90deg,#444 0,#7d8088 40px,#aeb6c4 90px,#8c94a4 120px,#b8c2d4) 0 0/100% 28px no-repeat,linear-gradient(#333,#000 40%)">
<div class="wt sans" style="height:29px;padding-bottom:2px"><svg width="16" height="16"><use href="#xw"/></svg><span class="glow">Measure Popup</span><button type="button" class="wx" style="right:-4px" aria-label="Close popup"><svg width="12" height="12" stroke="#555" stroke-width="3"><path d="M2 2l8 8M10 2l-8 8"/><path stroke="#fff" stroke-width="2" d="M2 2l8 8M10 2l-8 8"/></svg></button></div>
<div class="wb bgt"><div class="bg-black d-flex flex-column" style="gap:2px;padding-bottom:1px">
<div class="bgc text-center" style="line-height:15px;margin-bottom:-1px">Measure Mode</div>
<label class="bgc rad ps-1"><input class="dia" type="radio" name="mm">Between Points</label>
<label class="bgc rad ps-1"><input class="dia" type="radio" name="mm">Between Contours</label>
<label class="bgc rad ps-1"><input class="dia" type="radio" name="mm">Between Nets</label>
<label class="bgc rad ps-1"><input class="dia" type="radio" name="mm" checked>Annular Ring</label>
<label class="bgc rad ps-1"><input class="dia" type="radio" name="mm"><span class="text-nowrap">Between Midpoints</span></label></div>
<div style="height:31px"></div>
<div style="border-top:1px solid #000;padding:2px"><button type="button" class="up w-100 d-block" style="height:25px">Close</button></div></div></section>
</body>
</html>
